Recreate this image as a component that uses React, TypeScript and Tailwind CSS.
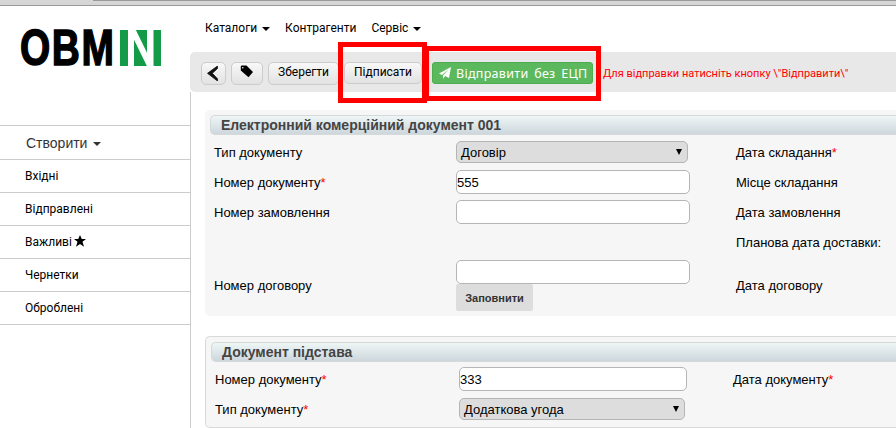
import type { ReactNode } from "react";

const roboto = "font-['Roboto',sans-serif]";
const arial = "font-['Liberation_Sans',Arial,sans-serif]";

function Caret() {
  return <span className="mt-[2px] h-0 w-0 border-x-4 border-t-4 border-x-transparent border-t-current" />;
}

function Logo() {
  return (
    <svg width="141" height="38" viewBox="0 0 141 38" className="mt-[23px] ml-[21px] shrink-0 overflow-visible">
      <text
        transform="translate(0 36.200) scale(0.77 1)"
        x="-1.200"
        fontFamily="'Liberation Sans', Arial, sans-serif"
        fontWeight="700"
        fontSize="50.500"
        letterSpacing="2"
        stroke="#000"
        strokeWidth="1.500"
      >
        OBM
      </text>
      <g fill="#149b48">
        <rect x="99" y="1" width="8" height="36" />
        <rect x="113" y="1" width="13" height="36" />
        <rect x="132.500" y="1" width="7.500" height="36" />
      </g>
      <path d="M110.100 -2 L130.400 39.500" stroke="#fff" strokeWidth="6" />
    </svg>
  );
}

function NavItem({ children, caret = false }: { children: ReactNode; caret?: boolean }) {
  return (
    <div className="flex items-center gap-[5px]">
      <span>{children}</span>
      {caret && <Caret />}
    </div>
  );
}

function SideItem({ children }: { children: ReactNode }) {
  return <li className="flex h-[33px] items-center gap-[3px] border-b border-[#ccc] pl-[25px] text-[12px] text-black">{children}</li>;
}

const toolButton =
  "flex shrink-0 items-center justify-center rounded-[5px] border border-[#ccc] bg-linear-to-b from-[#f8f8f8] to-[#e2e2e2]";

function Heading({ children }: { children: ReactNode }) {
  return (
    <h2 className="flex h-5 items-center rounded-l-[5px] border border-r-0 border-[#d5d9da] bg-linear-to-b from-[#eef6f6] to-[#cdd7dc] pl-[10px] text-[14px] font-bold text-[#444]">
      {children}
    </h2>
  );
}

function Label({ children, required = false }: { children?: ReactNode; required?: boolean }) {
  return (
    <span className="pt-[2px]">
      {children}
      {required && <span className="text-[#f00]">*</span>}
    </span>
  );
}

function Field({ value = "", className }: { value?: string; className: string }) {
  return <div className={`flex h-6 items-center rounded-[5px] border border-[#b5b5b5] bg-white pt-[2px] ${className}`}>{value}</div>;
}

function Select({ value, className }: { value: string; className: string }) {
  return (
    <div className={`flex h-[22px] items-center justify-between rounded-[5px] border border-[#b5b5b5] bg-[#ddd] pl-1 pr-[5px] ${className}`}>
      <span className="pt-[2px]">{value}</span>
      <span className="h-0 w-0 border-x-[3px] border-t-[6px] border-x-transparent border-t-black" />
    </div>
  );
}

export default function App() {
  return (
    <div className={`relative flex h-[428px] w-[896px] flex-col overflow-hidden bg-white text-black ${roboto}`}>
      <div className="flex h-[6px] shrink-0 justify-end border-b border-[#999] bg-[#d6d6d6]">
        <div className="h-px w-[803px] bg-[#999]" />
      </div>
      <div className="flex min-h-0 grow">
        <aside className="flex w-[190px] shrink-0 flex-col">
          <Logo />
          <div className={`mt-[58px] flex h-[35px] shrink-0 items-center gap-[6px] border-y border-[#ccc] pl-[26px] text-[14px] text-[#333] ${arial}`}>
            <span className="pt-[2px]">Створити</span>
            <Caret />
          </div>
          <ul>
            <SideItem>Вхідні</SideItem>
            <SideItem>Відправлені</SideItem>
            <SideItem>
              <span>Важливі</span>
              <svg width="12" height="12" viewBox="0 0 24 24" className="-ml-px -mt-[2px]">
                <path d="M12 0l3.500 8H24l-7 5.700 3 10L12 18 4 23.700l3-10L0 8h8.500z" />
              </svg>
            </SideItem>
            <SideItem>Чернетки</SideItem>
            <SideItem>Оброблені</SideItem>
          </ul>
        </aside>
        <main className="flex min-w-0 grow flex-col">
          <nav className="flex h-[46px] shrink-0 items-center gap-[15px] pb-[2px] pl-[15px] text-[12px]">
            <NavItem caret>Каталоги</NavItem>
            <NavItem>Контрагенти</NavItem>
            <NavItem caret>Сервіс</NavItem>
          </nav>
          <div className="flex h-10 shrink-0 items-start rounded-l-[5px] bg-[#e8e8e8] pl-[11px] pt-[10px] text-[12px]">
            <div className={`h-[23px] w-[25px] ${toolButton}`}>
              <svg width="12" height="15" viewBox="0 0 12 15" className="-ml-[2px]">
                <path d="M10.500 0L0.500 7.300 10.500 15V12.800L5.300 7.300 10.500 2.500z" fill="#111" stroke="#111" strokeWidth="0.800" />
              </svg>
            </div>
            <div className={`ml-[5px] h-[23px] w-8 ${toolButton}`}>
              <svg width="13" height="13" viewBox="0 0 13 13" className="-ml-px -mt-[5px]">
                <path fillRule="evenodd" d="M1.500 0.500h5L13 7 8.500 12.200 0.800 5.500V1.200zM2.800 1.900a.8.800 0 100 1.600.8.800 0 000-1.600z" />
              </svg>
            </div>
            <div className={`ml-[5px] h-[23px] w-[71px] pb-[3px] ${toolButton}`}>Зберегти</div>
            <div className={`ml-[5px] h-[22px] w-[78px] pb-[2px] ${toolButton}`}>Підписати</div>
            <div className="ml-[10px] flex h-[22px] w-[161px] shrink-0 items-center rounded-[3px] border border-[#4cae4c] bg-[#5cb85c] pl-[6px] text-white">
              <svg width="12" height="12" viewBox="0 0 24 24" fill="#fff" className="mr-[5px] shrink-0">
                <path d="M24 0L20 22l-8-4-4 6v-7L20 4 6 16 0 13z" />
              </svg>
              <span className="whitespace-pre pt-[2px] font-['Noto_Sans',sans-serif] text-[12.500px] tracking-[0.300px] [word-spacing:-0.700px]">Відправити  без  ЕЦП</span>
            </div>
            <span className="ml-[10px] mt-1 whitespace-nowrap text-[11px] leading-4 text-[#f00]">Для відправки натисніть кнопку \"Відправити\"</span>
          </div>
          <div className={`flex grow flex-col border-l border-[#ccc] pl-[14px] text-[13px] ${arial}`}>
            <section className="mt-[18px] h-[206px] shrink-0 rounded-l-[5px] bg-[#f6f6f6] pl-[5px] pt-[5px]">
              <Heading>Електронний комерційний документ 001</Heading>
              <div className="grid grid-cols-[242px_280px_1fr] grid-rows-[30px_30px_30px_30px_57px] items-center pl-1 pt-[2px]">
                <Label>Тип документу</Label>
                <Select value="Договір" className="w-[232px]" />
                <Label required>Дата складання</Label>
                <Label required>Номер документу</Label>
                <Field value="555" className="w-[234px]" />
                <Label>Місце складання</Label>
                <Label>Номер замовлення</Label>
                <Field className="w-[234px]" />
                <Label>Дата замовлення</Label>
                <span />
                <span />
                <Label>Планова дата доставки:</Label>
                <div><Label>Номер договору</Label></div>
                <div className="flex flex-col items-start">
                  <Field className="w-[234px]" />
                  <div className="flex h-[27px] w-[77px] items-center justify-center rounded-[2px] bg-[#ddd] pt-px text-[11px] font-bold text-[#333]">Заповнити</div>
                </div>
                <div><Label>Дата договору</Label></div>
              </div>
            </section>
            <section className="mt-5 h-[92px] shrink-0 rounded-l-[5px] border border-r-0 border-[#d9d9d9] bg-[#f6f6f6] pl-[5px] pt-[5px]">
              <Heading>Документ підстава</Heading>
              <div className="grid grid-cols-[244px_274px_1fr] grid-rows-[30px_30px] items-center pl-1 pt-[2px]">
                <Label required>Номер документу</Label>
                <Field value="333" className="w-[228px]" />
                <Label required>Дата документу</Label>
                <Label required>Тип документу</Label>
                <Select value="Додаткова угода" className="w-[226px]" />
              </div>
            </section>
          </div>
        </main>
      </div>
      <div className="absolute left-[338px] top-[42px] h-[61px] w-[89px] border-[5px] border-[#f00]" />
      <div className="absolute left-[424px] top-[46px] h-[55px] w-[177px] border-[5px] border-[#f00]" />
    </div>
  );
}
